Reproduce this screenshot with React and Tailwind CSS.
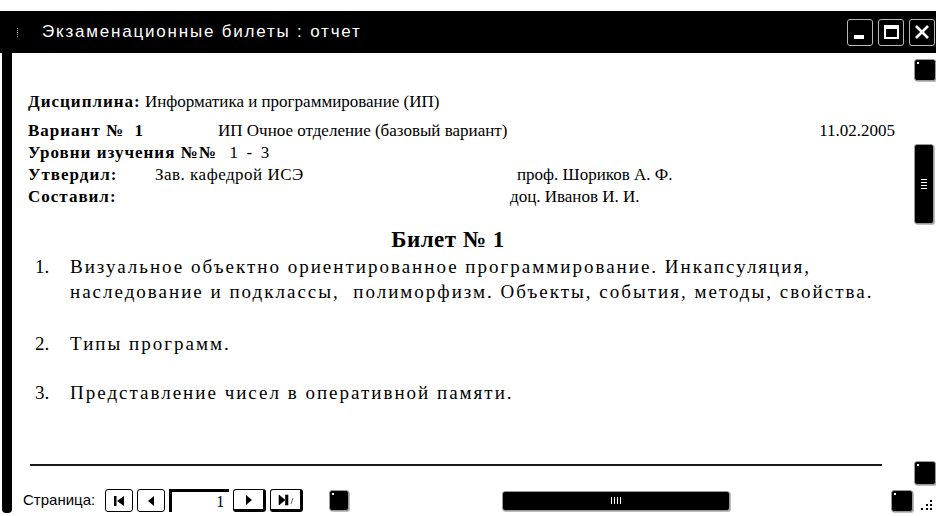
import React from "react";

// small black "3D" square used for scroll buttons
function ScrollKnob({ className = "" }) {
  return (
    <div
      className={
        "relative bg-black rounded-[3px] border border-[#9a9a9a] shadow-[1px_1px_0_#bdbdbd] " +
        className
      }
    >
      <span className="absolute left-[2px] top-[2px] w-[2px] h-[2px] bg-white" />
    </div>
  );
}

function TitleButton({ children }) {
  return (
    <div className="w-[26px] h-[27px] bg-black border border-[#b8b8b8] rounded-[3px] flex items-center justify-center">
      {children}
    </div>
  );
}

function NavButton({ children, raised }) {
  return (
    <div
      className={
        "h-[23px] bg-white border-black rounded-[3px] flex items-center justify-center " +
        (raised ? "w-[33px] border-t border-l border-r-[3px] border-b-[3px]" : "w-[28px] border-[1.5px]")
      }
    >
      {children}
    </div>
  );
}

export default function App() {
  return (
    <div className="w-[936px] h-[516px] bg-white overflow-hidden flex flex-col font-['Liberation_Serif',serif] text-black">
      <div className="h-[11px] shrink-0" />

      {/* title bar */}
      <div className="h-[42px] shrink-0 bg-black flex items-center pl-[17px]">
        <span className="w-[2px] h-[9px] border-l border-dotted border-[#aaa] mr-[23px]" />
        <span className="font-['Liberation_Sans',sans-serif] text-white text-[17px] tracking-[1.8px]">
          Экзаменационные билеты : отчет
        </span>
        <div className="ml-auto flex gap-[5px] pr-[1px]">
          <TitleButton>
            <span className="w-[10px] h-[4px] bg-white mt-[10px] -ml-[3px]" />
          </TitleButton>
          <TitleButton>
            <span className="w-[15px] h-[14px] border-2 border-t-[4px] border-white" />
          </TitleButton>
          <TitleButton>
            <svg width="16" height="16" viewBox="0 0 16 16">
              <path d="M2 2 L14 14 M14 2 L2 14" stroke="#fff" strokeWidth="2.6" />
            </svg>
          </TitleButton>
        </div>
      </div>

      <div className="flex-1 flex min-h-0">
        {/* left frame edge */}
        <div className="w-[10px] ml-[2px] mb-[3px] bg-black rounded-b-[4px] shrink-0" />

        <div className="flex-1 flex flex-col min-w-0">
          <div className="flex-1 flex min-h-0">
            {/* report page */}
            <div className="flex-1 flex flex-col pl-[16px] pt-[38px] text-[17px] leading-[22px]">
              <p>
                <b className="tracking-[1px]">Дисциплина:</b> Информатика и программирование (ИП)
              </p>
              <div className="mt-[7px] flex">
                <b className="w-[190px] tracking-[1px]">Вариант № &nbsp;1</b>
                <span>ИП Очное отделение (базовый вариант)</span>
                <span className="ml-auto mr-[17px]">11.02.2005</span>
              </div>
              <p>
                <b className="tracking-[1px]">Уровни изучения №№</b>&nbsp;&nbsp; 1 &nbsp;- &nbsp;3
              </p>
              <div className="flex">
                <b className="w-[127px] tracking-[1px]">Утвердил:</b>
                <span className="w-[362px] tracking-[0.5px]">Зав. кафедрой ИСЭ</span>
                <span>проф. Шориков А. Ф.</span>
              </div>
              <div className="flex">
                <b className="w-[482px] tracking-[1px]">Составил:</b>
                <span>доц. Иванов И. И.</span>
              </div>

              <h1 className="mt-[18px] text-center font-bold text-[23px] leading-[28px] tracking-[0.5px] pr-[44px]">
                Билет № 1
              </h1>

              <ol className="ml-[7px] text-[19px] leading-[25px] tracking-[2px] whitespace-nowrap">
                <li className="flex">
                  <span className="w-[35px] shrink-0 tracking-normal">1.</span>
                  <span>
                    Визуальное объектно ориентированное программирование. Инкапсуляция,
                    <br />
                    наследование и подклассы,&nbsp; полиморфизм. Объекты, события, методы, свойства.
                  </span>
                </li>
                <li className="flex mt-[27px]">
                  <span className="w-[35px] shrink-0 tracking-normal">2.</span>
                  <span>Типы программ.</span>
                </li>
                <li className="flex mt-[24px]">
                  <span className="w-[35px] shrink-0 tracking-normal">3.</span>
                  <span>Представление чисел в оперативной памяти.</span>
                </li>
              </ol>

              <div className="mt-auto mb-[21px] ml-[2px] mr-[30px] h-[2px] bg-[#1a1a1a]" />
            </div>

            {/* vertical scroll bar */}
            <div className="w-[24px] shrink-0 flex flex-col items-end pt-[6px] pb-[2px]">
              <ScrollKnob className="w-[22px] h-[22px]" />
              <div className="mt-[63px] mr-[2px] w-[20px] h-[80px] bg-black rounded-[3px] border border-[#9a9a9a] shadow-[1px_1px_0_#bdbdbd] flex flex-col items-center justify-center gap-[2px]">
                <span className="w-[6px] h-[1px] bg-white" />
                <span className="w-[6px] h-[1px] bg-white" />
                <span className="w-[6px] h-[1px] bg-white" />
                <span className="w-[6px] h-[1px] bg-white" />
              </div>
              <ScrollKnob className="mt-auto w-[22px] h-[24px]" />
            </div>
          </div>

          {/* record navigation + horizontal scroll bar */}
          <div className="h-[29px] shrink-0 flex items-center pb-[2px]">
            <span className="ml-[11px] font-['Liberation_Sans',sans-serif] text-[15px]">Страница:</span>
            <div className="ml-[10px] flex items-center gap-[4px]">
              <NavButton>
                <svg width="12" height="12" viewBox="0 0 12 12">
                  <path d="M1 1h2.5v10H1z M11 1v10L4 6z" fill="#000" />
                </svg>
              </NavButton>
              <NavButton>
                <svg width="12" height="12" viewBox="0 0 12 12">
                  <path d="M9 1v10L3 6z" fill="#000" />
                </svg>
              </NavButton>
              <div className="w-[60px] h-[23px] border-l-[3px] border-t-[3px] border-black flex items-center justify-end pr-[5px] text-[16px]">
                1
              </div>
              <NavButton raised>
                <svg width="12" height="12" viewBox="0 0 12 12">
                  <path d="M3 1v10L9 6z" fill="#000" />
                </svg>
              </NavButton>
              <NavButton raised>
                <svg width="16" height="12" viewBox="0 0 16 12">
                  <path d="M1 1v10L7 6z M7.5 1h2.5v10H7.5z M13 10l2-6" fill="#000" stroke="#000" strokeWidth="0.6" />
                </svg>
              </NavButton>
            </div>
            <ScrollKnob className="ml-[26px] w-[20px] h-[21px]" />
            <div className="ml-[153px] w-[228px] h-[20px] bg-black rounded-[3px] border border-[#9a9a9a] shadow-[1px_1px_0_#bdbdbd] flex items-center justify-center gap-[2px]">
              <span className="w-[1px] h-[7px] bg-white" />
              <span className="w-[1px] h-[7px] bg-white" />
              <span className="w-[1px] h-[7px] bg-white" />
              <span className="w-[1px] h-[7px] bg-white" />
            </div>
            <ScrollKnob className="ml-auto w-[22px] h-[22px]" />
            <div className="ml-[8px] mr-[3px] mt-[8px] grid grid-cols-3 gap-[2px] w-[12px]">
              <span />
              <span />
              <span className="w-[2px] h-[2px] bg-black" />
              <span />
              <span className="w-[2px] h-[2px] bg-black" />
              <span className="w-[2px] h-[2px] bg-black" />
              <span className="w-[2px] h-[2px] bg-black" />
              <span className="w-[2px] h-[2px] bg-black" />
              <span className="w-[2px] h-[2px] bg-black" />
            </div>
          </div>
        </div>
      </div>
    </div>
  );
}
